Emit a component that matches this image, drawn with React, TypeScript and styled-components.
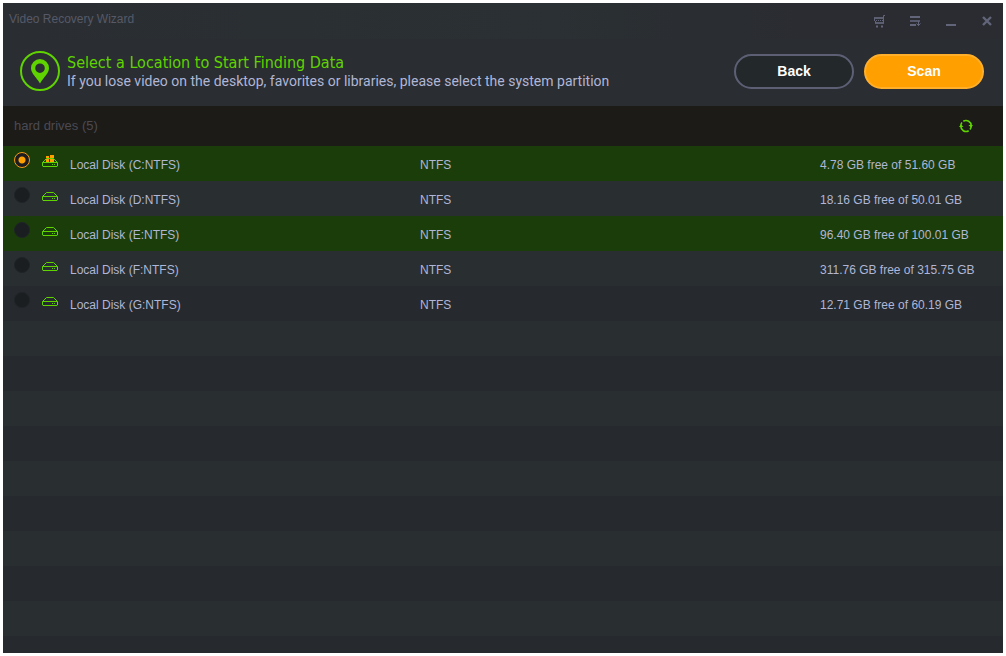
import React, { useState } from "react";
import styled, { createGlobalStyle } from "styled-components";

const GlobalStyle = createGlobalStyle`
  * { box-sizing: border-box; }
  body { margin: 0; background: #ffffff; font-family: "Liberation Sans", Arial, sans-serif; }
`;

const Page = styled.div`
  display: flex;
  min-height: 100vh;
  padding: 3px;
`;

const Window = styled.main`
  flex: 1;
  min-width: 0;
  display: flex;
  flex-direction: column;
  background: #2a2d32;
`;

const TitleBar = styled.header`
  display: flex;
  align-items: center;
  justify-content: space-between;
  height: 36px;
  padding: 0 6px;
  background: linear-gradient(90deg, #2a2e32, #2a3033 55%, #2a2c31 80%);
`;

const AppName = styled.h1`
  margin: 0 0 4px;
  font-size: 12px;
  line-height: 16px;
  font-weight: 400;
  color: #565968;
`;

const WindowControls = styled.div`
  display: flex;
  gap: 16px;
`;

const IconButton = styled.button<{ $tone: string }>`
  display: flex;
  align-items: center;
  justify-content: center;
  width: 20px;
  height: 20px;
  padding: 0;
  border: 0;
  background: none;
  color: ${(p) => p.$tone};
  cursor: pointer;
`;

const Intro = styled.section`
  display: flex;
  align-items: flex-start;
  height: 67px;
  padding: 12px 19px 0 17px;
`;

const IntroText = styled.div`
  flex: 1;
  min-width: 0;
  padding: 2px 0 0 7px;
`;

const Heading = styled.h2`
  margin: 0;
  font-family: "DejaVu Sans Condensed", "Noto Sans", sans-serif;
  font-size: 16px;
  line-height: 19px;
  font-weight: 400;
  color: #5fd400;
`;

const Hint = styled.p`
  margin: 0;
  font-family: Roboto, "Noto Sans", sans-serif;
  font-size: 14px;
  line-height: 19px;
  color: #b0b6d6;
`;

const Actions = styled.div`
  display: flex;
  gap: 10px;
  padding-top: 3px;
`;

const ActionButton = styled.button<{ $primary?: boolean }>`
  width: 120px;
  height: 35px;
  padding: 0 0 2px;
  border: 2px solid ${(p) => (p.$primary ? "#ffaf2a" : "#5d6075")};
  border-radius: 18px;
  background: ${(p) => (p.$primary ? "#ff9f00" : "#23282b")};
  color: #ffffff;
  font: 700 14px "Liberation Sans", Arial, sans-serif;
  cursor: pointer;
`;

const ListHeader = styled.div`
  display: flex;
  align-items: center;
  justify-content: space-between;
  height: 40px;
  padding: 0 27px 0 11px;
  background: #1c1b18;
`;

const ListTitle = styled.h3`
  margin: 0;
  font-size: 13px;
  line-height: 16px;
  font-weight: 400;
  color: #4b4a53;
`;

const DriveList = styled.div`
  flex: 1;
  background: repeating-linear-gradient(#26292d 0 35px, #292e31 35px 70px);
`;

const DriveTable = styled.table`
  width: 100%;
  table-layout: fixed;
  border-collapse: collapse;
`;

const Column = styled.col<{ $width?: string }>`
  width: ${(p) => p.$width ?? "auto"};
`;

const DriveRow = styled.tr<{ $lit: boolean }>`
  height: 35px;
  background: ${(p) => (p.$lit ? "#1b3d0a" : "transparent")};
`;

const Cell = styled.td`
  padding: 2px 0 0;
  font-size: 12px;
  line-height: 16px;
  color: #b0b6d6;
  white-space: nowrap;
`;

const MarkCell = styled.td<{ $indent?: boolean }>`
  padding: 6px 0 0 ${(p) => (p.$indent ? "11px" : "0")};
  vertical-align: top;
`;

const Radio = styled.input`
  appearance: none;
  display: block;
  width: 16px;
  height: 16px;
  margin: 0;
  border: 1px solid #1f2428;
  border-radius: 50%;
  background: #1a1e20;
  cursor: pointer;

  &:checked {
    border-color: #f79a12;
    background: radial-gradient(circle, #ffa000 0 3px, #1d1c20 4px);
  }
`;

const PinIcon = () => (
  <svg width="40" height="40" viewBox="0 0 40 40" aria-hidden="true">
    <circle cx="20" cy="20" r="19" fill="none" stroke="#5fd400" strokeWidth="2" />
    <path
      fill="#5fd400"
      fillRule="evenodd"
      d="M20 8a9 9 0 0 0-9 9c0 5.400 5 8.800 9 15.400 4-6.600 9-10 9-15.400a9 9 0 0 0-9-9zm0 4.400a4.800 4.800 0 1 1 0 9.600 4.800 4.800 0 0 1 0-9.600z"
    />
  </svg>
);

const CartIcon = () => (
  <svg width="12" height="14" viewBox="0 0 12 14" fill="none" stroke="currentColor" aria-hidden="true">
    <path d="M12 1.500h-1.500v7.500M1 4h10M1.500 4v3M2.500 7v2M2 9h9" />
    <path d="M1 4h10M2 9h9" strokeWidth="1.400" />
    <path d="M3 6.500h7" strokeDasharray="1 1" />
    <path d="M3 12.500h2M8 12.500h2" strokeWidth="2" />
  </svg>
);

const MenuIcon = () => (
  <svg width="12" height="12" viewBox="0 0 12 12" fill="none" stroke="currentColor" aria-hidden="true">
    <path d="M1 2h10M1 10h6" strokeWidth="2" />
    <path d="M1 6h10" strokeWidth="1.600" />
    <path d="M9.500 6v5M7.500 8.500l2 2 2-2" />
  </svg>
);

const MinimizeIcon = () => (
  <svg width="10" height="12" viewBox="0 0 10 12" aria-hidden="true">
    <path d="M0 9h10v2H0z" fill="currentColor" />
  </svg>
);

const CloseIcon = () => (
  <svg width="10" height="10" viewBox="0 0 10 10" aria-hidden="true">
    <path d="M1 1l8 8M9 1L1 9" stroke="currentColor" strokeWidth="2.400" />
  </svg>
);

const RefreshIcon = () => (
  <svg width="14" height="14" viewBox="0 0 14 14" fill="none" stroke="currentColor" aria-hidden="true">
    <path d="M4.300 2.300A5.200 5.200 0 0 1 12.200 7M9.700 11.700A5.200 5.200 0 0 1 1.800 7" strokeWidth="1.600" />
    <path d="M1.800 7A5.200 5.200 0 0 1 3 3.600M12.200 7A5.200 5.200 0 0 1 11 10.400" strokeWidth="1.500" />
    <path d="M9.500 6H14l-2 2.800zM0 8h4.500L2 5.200z" fill="currentColor" stroke="none" />
  </svg>
);

const DriveIcon = ({ system }: { system: boolean }) => (
  <svg width="16" height="16" viewBox="0 0 16 16" fill="none" aria-hidden="true">
    <g transform={system ? "translate(0 1)" : undefined}>
      <path d="M.5 9.500v3.500l.5.500h14l.5-.5V9.500H.5zM.5 9.500l4-4h7l4 4" stroke="#5fd400" />
      <path d="M10 11h1v1h-1zM12 11h1v1h-1z" fill="#5fd400" />
    </g>
    {system && <path d="M4 4h3v2H4zM8 3h4v3H8zM4 7h3v3H4zM8 7h4v3H8z" fill="#ff9f00" />}
  </svg>
);

const drives = [
  { letter: "C", space: "4.78 GB free of 51.60 GB" },
  { letter: "D", space: "18.16 GB free of 50.01 GB" },
  { letter: "E", space: "96.40 GB free of 100.01 GB" },
  { letter: "F", space: "311.76 GB free of 315.75 GB" },
  { letter: "G", space: "12.71 GB free of 60.19 GB" },
];

export default function App() {
  const [selected, setSelected] = useState("C");

  return (
    <Page>
      <GlobalStyle />
      <Window>
        <TitleBar>
          <AppName>Video Recovery Wizard</AppName>
          <WindowControls>
            <IconButton $tone="#62657a" aria-label="Buy"><CartIcon /></IconButton>
            <IconButton $tone="#62657a" aria-label="Menu"><MenuIcon /></IconButton>
            <IconButton $tone="#62657a" aria-label="Minimize"><MinimizeIcon /></IconButton>
            <IconButton $tone="#62657a" aria-label="Close"><CloseIcon /></IconButton>
          </WindowControls>
        </TitleBar>
        <Intro>
          <PinIcon />
          <IntroText>
            <Heading>Select a Location to Start Finding Data</Heading>
            <Hint>If you lose video on the desktop, favorites or libraries, please select the system partition</Hint>
          </IntroText>
          <Actions>
            <ActionButton>Back</ActionButton>
            <ActionButton $primary>Scan</ActionButton>
          </Actions>
        </Intro>
        <ListHeader>
          <ListTitle>hard drives (5)</ListTitle>
          <IconButton $tone="#5fd400" aria-label="Refresh"><RefreshIcon /></IconButton>
        </ListHeader>
        <DriveList>
          <DriveTable aria-label="Hard drives">
            <colgroup>
              <Column $width="39px" />
              <Column $width="28px" />
              <Column $width="35%" />
              <Column $width="40%" />
              <Column />
            </colgroup>
            <tbody>
              {drives.map(({ letter, space }, index) => (
                <DriveRow key={letter} $lit={index === 0 || index === 2}>
                  <MarkCell $indent>
                    <Radio
                      type="radio"
                      name="drive"
                      id={`drive-${letter}`}
                      checked={selected === letter}
                      onChange={() => setSelected(letter)}
                    />
                  </MarkCell>
                  <MarkCell><DriveIcon system={letter === "C"} /></MarkCell>
                  <Cell><label htmlFor={`drive-${letter}`}>Local Disk ({letter}:NTFS)</label></Cell>
                  <Cell>NTFS</Cell>
                  <Cell>{space}</Cell>
                </DriveRow>
              ))}
            </tbody>
          </DriveTable>
        </DriveList>
      </Window>
    </Page>
  );
}
